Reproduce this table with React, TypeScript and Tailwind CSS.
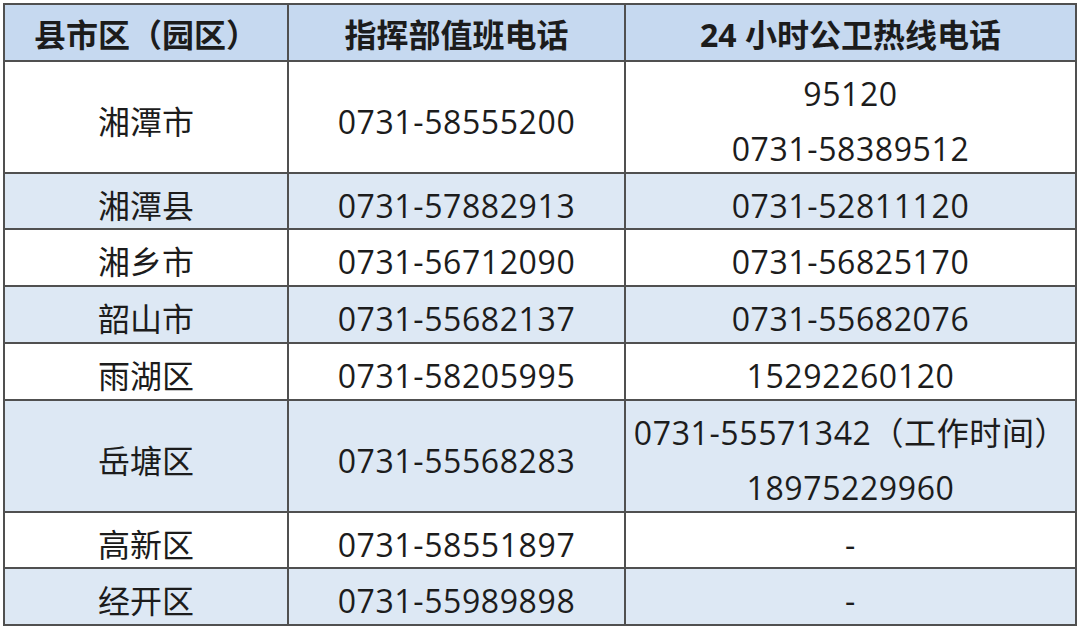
const rows: { area: string; duty: string; hotline: string[]; alt: boolean }[] = [
  { area: "湘潭市", duty: "0731-58555200", hotline: ["95120", "0731-58389512"], alt: false },
  { area: "湘潭县", duty: "0731-57882913", hotline: ["0731-52811120"], alt: true },
  { area: "湘乡市", duty: "0731-56712090", hotline: ["0731-56825170"], alt: false },
  { area: "韶山市", duty: "0731-55682137", hotline: ["0731-55682076"], alt: true },
  { area: "雨湖区", duty: "0731-58205995", hotline: ["15292260120"], alt: false },
  { area: "岳塘区", duty: "0731-55568283", hotline: ["0731-55571342（工作时间）", "18975229960"], alt: true },
  { area: "高新区", duty: "0731-58551897", hotline: ["-"], alt: false },
  { area: "经开区", duty: "0731-55989898", hotline: ["-"], alt: true },
];

const cell = "flex flex-col items-center justify-center pt-[9px] leading-none";

export default function App() {
  return (
    <div className="w-[1080px] h-[627px] bg-white pt-[3px] pl-[3px] font-['Open_Sans','Noto_Sans_CJK_SC',sans-serif] text-[#1c1c1c]">
      <div className="grid w-[1074px] grid-cols-[282px_335px_449px] grid-rows-[55px_110px_54px_55px_55px_55px_110px_54px_55px] gap-[2px] border-2 border-[#505050] bg-[#505050] text-[32px]">
        <div className="flex items-center justify-center bg-[#c6d9f0] pt-[4px] font-bold leading-none">县市区（园区）</div>
        <div className="flex items-center justify-center bg-[#c6d9f0] pt-[4px] font-bold leading-none">指挥部值班电话</div>
        <div className="flex items-center justify-center bg-[#c6d9f0] pt-[4px] font-bold leading-none">24 小时公卫热线电话</div>
        {rows.map((r) => {
          const bg = r.alt ? "bg-[#dde8f4]" : "bg-white";
          return [
            <div key={r.area + "a"} className={`${cell} ${bg}`}>{r.area}</div>,
            <div key={r.area + "d"} className={`${cell} ${bg} tracking-[0.6px]`}>{r.duty}</div>,
            <div key={r.area + "h"} className={`${cell} ${bg} gap-[23px] tracking-[0.6px]`}>
              {r.hotline.map((h) => (
                <div key={h}>{h}</div>
              ))}
            </div>,
          ];
        })}
      </div>
    </div>
  );
}
